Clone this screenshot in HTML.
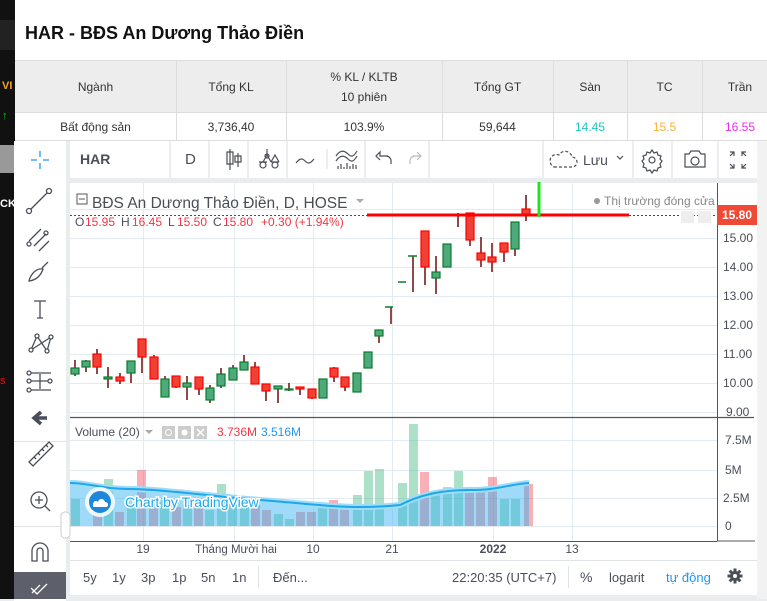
<!DOCTYPE html>
<html><head><meta charset="utf-8"><style>
*{margin:0;padding:0;box-sizing:border-box}
body{width:767px;height:599px;overflow:hidden;background:#e9edf0;font-family:"Liberation Sans",sans-serif;position:relative}
.abs{position:absolute}
.t{font-size:12px;color:#333;text-align:center}
</style></head><body>
<div class="abs" style="left:0;top:0;width:15px;height:599px;background:#111"></div>
<div class="abs" style="left:0;top:20px;width:15px;height:30px;background:#222"></div>
<div class="abs" style="left:2px;top:80px;color:#f5a623;font-size:11px;font-weight:bold">VI</div>
<div class="abs" style="left:2px;top:110px;color:#0c0;font-size:11px;font-weight:bold">↑</div>
<div class="abs" style="left:0;top:145px;width:15px;height:28px;background:#999"></div>
<div class="abs" style="left:0;top:198px;color:#fff;font-size:11px;font-weight:bold">CK</div>
<div class="abs" style="left:0;top:375px;color:#f00;font-size:11px">s</div>
<div class="abs" style="left:15px;top:0;width:752px;height:141px;background:#fff"></div>
<div class="abs" style="left:25px;top:23px;font-size:18px;font-weight:bold;color:#111">HAR - BĐS An Dương Thảo Điền</div>
<div class="abs" style="left:15px;top:60px;width:752px;height:53px;background:#ededed;border-top:1px solid #ddd;border-bottom:1px solid #ddd"></div>
<div class="abs" style="left:15px;top:140px;width:752px;height:1px;background:#ddd"></div>
<div class="abs" style="left:176px;top:60px;width:1px;height:80px;background:#ddd"></div>
<div class="abs" style="left:286px;top:60px;width:1px;height:80px;background:#ddd"></div>
<div class="abs" style="left:442px;top:60px;width:1px;height:80px;background:#ddd"></div>
<div class="abs" style="left:553px;top:60px;width:1px;height:80px;background:#ddd"></div>
<div class="abs" style="left:627px;top:60px;width:1px;height:80px;background:#ddd"></div>
<div class="abs" style="left:702px;top:60px;width:1px;height:80px;background:#ddd"></div>
<div class="abs t" style="left:15px;top:80px;width:161px">Ngành</div>
<div class="abs t" style="left:176px;top:80px;width:110px">Tổng KL</div>
<div class="abs t" style="left:286px;top:70px;width:156px">% KL / KLTB</div>
<div class="abs t" style="left:286px;top:90px;width:156px">10 phiên</div>
<div class="abs t" style="left:442px;top:80px;width:111px">Tổng GT</div>
<div class="abs t" style="left:553px;top:80px;width:74px">Sàn</div>
<div class="abs t" style="left:627px;top:80px;width:75px">TC</div>
<div class="abs t" style="left:702px;top:80px;width:76px">Trần</div>
<div class="abs t" style="left:15px;top:120px;width:161px">Bất động sản</div>
<div class="abs t" style="left:176px;top:120px;width:110px">3,736,40</div>
<div class="abs t" style="left:286px;top:120px;width:156px">103.9%</div>
<div class="abs t" style="left:442px;top:120px;width:111px">59,644</div>
<div class="abs t" style="left:553px;top:120px;width:74px;color:#1cc6c6">14.45</div>
<div class="abs t" style="left:627px;top:120px;width:75px;color:#f7b23b">15.5</div>
<div class="abs t" style="left:702px;top:120px;width:76px;color:#e62ee6">16.55</div>
<div class="abs" style="left:757px;top:141px;width:10px;height:458px;background:#f2f2f2"></div>
<div class="abs" style="left:14px;top:141px;width:52px;height:460px;background:#fff"></div>
<div class="abs" style="left:14px;top:441px;width:52px;height:1px;background:#e0e3e6"></div>
<div class="abs" style="left:14px;top:526px;width:52px;height:1px;background:#e0e3e6"></div>
<div class="abs" style="left:14px;top:572px;width:52px;height:27px;background:#5d606b"></div>
<svg class="abs" style="left:14px;top:141px" width="52" height="458" fill="none" stroke="#4a4e58" stroke-width="1.3">
<g stroke="#2196f3"><path d="M26 10v6M26 22v6M17 19h6M29 19h6"/></g>
<path d="M16 69L34 51"/><circle cx="15" cy="70" r="2.5" fill="#fff"/><circle cx="35" cy="50" r="2.5" fill="#fff"/>
<path d="M15 100l12-12M20 105l12-12M25 110l10-10"/><circle cx="15" cy="103" r="2"/><circle cx="32" cy="92" r="2"/>
<path d="M15 140c2-8 8-13 14-12c-2 6-6 11-14 12zM28 127l6-6"/>
<path d="M20 160h12M26 160v17M23 177h6"/>
<path d="M17 209l6-14 10 15 4-14M17 209l20-13"/><circle cx="17" cy="209" r="2" fill="#fff"/><circle cx="23" cy="195" r="2" fill="#fff"/><circle cx="33" cy="210" r="2" fill="#fff"/><circle cx="37" cy="196" r="2" fill="#fff"/>
<path d="M15 232h22M15 240h22M15 249h22M26 233v15"/><circle cx="15" cy="232" r="2" fill="#fff"/><circle cx="15" cy="240" r="2" fill="#fff"/><circle cx="36" cy="240" r="2" fill="#fff"/><circle cx="15" cy="249" r="2" fill="#fff"/>
<path d="M33 277H21M27 271l-7 6 7 6" stroke-width="3.5"/>
<path d="M15 321l20-20 4 4-20 20zM20 316l2 2M24 312l2 2M28 308l2 2M32 304l2 2"/>
<circle cx="25" cy="359" r="8"/><path d="M31 365l5 5M25 355v8M21 359h8"/>
<path d="M18 420v-10a8 8 0 0 1 16 0v10h-5v-10a3 3 0 0 0-6 0v10z"/>
<path d="M17 447l6 6 10-10M18 452l8-8" stroke="#fff"/>
</svg>
<div class="abs" style="left:70px;top:141px;width:687px;height:37px;background:#fff"></div>
<svg class="abs" style="left:70px;top:141px" width="687" height="37" fill="none" stroke="#4a4e58" stroke-width="1.2">
<g stroke="#e0e3e6"><path d="M100 0v37M139 0v37M178 0v37M217 0v37M257 8v20M295 0v37M359 0v37M473 0v37M563 0v37M602 0v37M648 0v37"/></g>
<path d="M160 8v21M157 11h6v12h-6zM168 12v14M165 15h6v6h-6z"/>
<path d="M197 8v6M193 21l4-7 4 7M189 21h8M201 21h8M201 21l4-7 4 7M189 21l4 0"/><circle cx="197" cy="15" r="2"/><circle cx="193" cy="24" r="3"/><circle cx="205" cy="24" r="3"/>
<path d="M226 22c4-5 6-5 9-2s5 3 9-2"/>
<path d="M266 15c4-6 8-6 12-2s6 2 9-3M266 20c4-6 8-6 12-2s6 2 9-3M268 28v-3M271 28v-5M274 28v-2M277 28v-6M280 28v-3M283 28v-5M286 28v-4"/>
<path d="M318 15h-8v-4l-4 4 4 4M310 15h6a5 5 0 0 1 5 5v3"/>
<path d="M343 15h8M347 11l4 4-4 4M351 15h-6a5 5 0 0 0-5 5v3" stroke="#bbb"/>
<path d="M484 26h18a5 5 0 0 0 0-10a7 7 0 0 0-13-2a6 6 0 0 0-5 12z" stroke-dasharray="3 2"/>
<path d="M547 15l3 3 3-3"/>
<circle cx="582" cy="19" r="3"/><path d="M582 9l2 3 3-1 1 3 3 1-1 3 2 2-2 3 1 3-3 1-1 3-3-1-2 3-2-3-3 1-1-3-3-1 1-3-2-3 2-2-1-3 3-1 1-3 3 1z"/>
<path d="M615 13h4l2-3h8l2 3h4v13h-20z"/><circle cx="625" cy="20" r="4"/>
<path d="M660 11h4v4M664 11l-4 4M676 11h-4v4M672 11l4 4M660 27h4v-4M664 27l-4-4M676 27h-4v-4M672 27l4-4"/>
</svg>
<div class="abs" style="left:80px;top:151px;font-size:14px;font-weight:bold;color:#4a4e58">HAR</div>
<div class="abs" style="left:185px;top:151px;font-size:15px;color:#4a4e58">D</div>
<div class="abs" style="left:583px;top:152px;font-size:14px;color:#4a4e58">Lưu</div>
<div class="abs" style="left:70px;top:183px;width:687px;height:412px;background:#fff"></div>
<svg class="abs" style="left:0;top:0" width="767" height="599">
<g stroke="#e3ebf0" stroke-width="1">
<path d="M70 209.5h647M70 238.5h647M70 267.5h647M70 296.5h647M70 325.5h647M70 354.5h647M70 383.5h647M70 412.5h647"/>
<path d="M70 440.5h647M70 470.5h647M70 498.5h647M70 526.5h647"/>
<path d="M143.5 183v358M234.5 183v358M313.5 183v358M392.5 183v358M493.5 183v358M572.5 183v358"/>
</g>
<path d="M70 417.5h684" stroke="#555" stroke-width="1.2"/>
<path d="M717.5 183v358M70 541.5h647" stroke="#555" stroke-width="1"/>
<path d="M717 541h38" stroke="#555"/>
<g opacity="0.45">
<g fill="#4cbb8a">
<rect x="71" y="499" width="9" height="27"/><rect x="104" y="479" width="9" height="47"/><rect x="127" y="505" width="9" height="21"/><rect x="160" y="500" width="9" height="26"/><rect x="183" y="505" width="9" height="21"/><rect x="205" y="510" width="9" height="16"/><rect x="217" y="484" width="9" height="42"/><rect x="228" y="500" width="9" height="26"/><rect x="240" y="505" width="9" height="21"/><rect x="274" y="514" width="9" height="12"/><rect x="285" y="519" width="9" height="7"/><rect x="318" y="505" width="9" height="21"/><rect x="353" y="495" width="9" height="31"/><rect x="364" y="471" width="9" height="55"/><rect x="375" y="469" width="9" height="57"/><rect x="398" y="483" width="9" height="43"/><rect x="409" y="424" width="9" height="102"/><rect x="431" y="491" width="9" height="35"/><rect x="443" y="487" width="9" height="39"/><rect x="454" y="471" width="9" height="55"/><rect x="500" y="499" width="9" height="27"/><rect x="511" y="499" width="9" height="27"/>
</g>
<g fill="#f0505e">
<rect x="93" y="510" width="9" height="16"/><rect x="115" y="512" width="9" height="14"/><rect x="137" y="470" width="9" height="56"/><rect x="149" y="505" width="9" height="21"/><rect x="172" y="507" width="9" height="19"/><rect x="194" y="507" width="9" height="19"/><rect x="251" y="505" width="9" height="21"/><rect x="262" y="510" width="9" height="16"/><rect x="296" y="512" width="9" height="14"/><rect x="307" y="512" width="9" height="14"/><rect x="329" y="500" width="9" height="26"/><rect x="340" y="510" width="9" height="16"/><rect x="420" y="472" width="9" height="54"/><rect x="465" y="489" width="9" height="37"/><rect x="476" y="489" width="9" height="37"/><rect x="488" y="477" width="9" height="49"/><rect x="524" y="484" width="9" height="42"/>
</g>
</g>
<path d="M70 483C90 483 100 489 130 489S220 497 260 500S330 507 360 507C380 507 390 506 400 505C420 495 440 490 470 490S510 484 529 483L529 526H70Z" fill="#2ab0ef" opacity="0.45"/>
<path d="M70 483C90 483 100 489 130 489S220 497 260 500S330 507 360 507C380 507 390 506 400 505C420 495 440 490 470 490S510 484 529 483" fill="none" stroke="#9fdcf8" stroke-width="6"/>
<path d="M70 483C90 483 100 489 130 489S220 497 260 500S330 507 360 507C380 507 390 506 400 505C420 495 440 490 470 490S510 484 529 483" fill="none" stroke="#1ea7ea" stroke-width="2"/>
<g stroke="#6b0f0f" stroke-width="1.5">
<path d="M75 360v16M86 360v12M97 349v25M108 367v21M120 373v11M131 361v22M142 339v34M154 355v24M165 376v21M176 376v12M187 376v24M199 377v18M210 385v18M221 368v20M233 365v15M244 355v15M255 362v22M266 384v17M278 386v17M289 383v8M300 387v8M312 389v10M334 367v15M345 377v14M379 330v13M391 307v17M413 256v36M425 231v54M436 256v38M458 213v14M470 213v33M481 237v30M492 243v29M504 243v19M515 222v34M526 195v26"/>
</g>
<g stroke-width="1.2">
<g fill="#4ea97c" stroke="#0a7d2a">
<rect x="71" y="368" width="8" height="6"/><rect x="82" y="361" width="8" height="6"/><rect x="104" y="377" width="8" height="2"/><rect x="127" y="361" width="8" height="12"/><rect x="161" y="379" width="8" height="18"/><rect x="183" y="383" width="8" height="4"/><rect x="206" y="388" width="8" height="12"/><rect x="217" y="374" width="8" height="12"/><rect x="229" y="368" width="8" height="12"/><rect x="240" y="362" width="8" height="8"/><rect x="274" y="386" width="8" height="3"/><rect x="285" y="389" width="8" height="1"/><rect x="319" y="379" width="8" height="19"/><rect x="353" y="373" width="8" height="19"/><rect x="364" y="352" width="8" height="16"/><rect x="375" y="330" width="8" height="6"/><rect x="432" y="272" width="8" height="6"/><rect x="443" y="244" width="8" height="23"/><rect x="511" y="222" width="8" height="27"/>
</g>
<g fill="#ef4234" stroke="#f00">
<rect x="93" y="354" width="8" height="13"/><rect x="116" y="377" width="8" height="4"/><rect x="138" y="339" width="8" height="18"/><rect x="150" y="357" width="8" height="22"/><rect x="172" y="376" width="8" height="11"/><rect x="195" y="377" width="8" height="12"/><rect x="251" y="367" width="8" height="17"/><rect x="262" y="384" width="8" height="7"/><rect x="296" y="387" width="8" height="2"/><rect x="308" y="389" width="8" height="9"/><rect x="330" y="368" width="8" height="9"/><rect x="341" y="377" width="8" height="10"/><rect x="421" y="231" width="8" height="36"/><rect x="466" y="213" width="8" height="27"/><rect x="477" y="253" width="8" height="7"/><rect x="488" y="257" width="8" height="5"/><rect x="500" y="243" width="8" height="9"/><rect x="522" y="209" width="8" height="5"/>
</g>
</g>
<path d="M385 307h8M398 282h8M408 256h9" stroke="#0a7d2a" stroke-width="1.5"/>
<path d="M70 215.5h297" stroke="#f00" stroke-width="1" stroke-dasharray="2 2"/>
<path d="M367 215h262" stroke="#f00" stroke-width="3"/>
<path d="M629 215.5h88" stroke="#f00" stroke-width="1" stroke-dasharray="2 2"/>
<path d="M539 182v35" stroke="#1be51b" stroke-width="3"/>
<rect x="717" y="205" width="40" height="20" fill="#ef4a36"/>
<text x="737" y="219" fill="#fff" font-size="12" font-weight="bold" text-anchor="middle" font-family="Liberation Sans">15.80</text>
<rect x="681" y="211" width="13" height="12" fill="#eee"/><rect x="698" y="211" width="13" height="12" fill="#eee"/>
<g font-family="Liberation Sans" font-size="12" fill="#4a4e58">
<text x="723" y="242">15.00</text><text x="723" y="271">14.00</text><text x="723" y="300">13.00</text><text x="723" y="329">12.00</text><text x="723" y="358">11.00</text><text x="723" y="387">10.00</text><text x="726" y="416">9.00</text>
<text x="725" y="444">7.5M</text><text x="725" y="474">5M</text><text x="723" y="502">2.5M</text><text x="725" y="530">0</text>
<text x="143" y="553" text-anchor="middle">19</text><text x="236" y="553" text-anchor="middle" font-size="11.5">Tháng Mười hai</text><text x="313" y="553" text-anchor="middle">10</text><text x="392" y="553" text-anchor="middle">21</text><text x="493" y="553" text-anchor="middle" font-weight="bold">2022</text><text x="572" y="553" text-anchor="middle">13</text>
</g>
<circle cx="100" cy="502" r="15" fill="#fff" opacity="0.85"/>
<circle cx="100" cy="502" r="11" fill="#1e88d8"/>
<path d="M93 505c0-4 3-5 5-3c1-4 6-4 7 0c3 0 4 3 2 5h-14z" fill="#fff"/>
<text x="125" y="507" font-family="Liberation Sans" font-size="14" fill="#1ea7ea" stroke="#fff" stroke-width="3" paint-order="stroke">Chart by TradingView</text>
<rect x="77" y="194" width="10" height="10" fill="none" stroke="#555"/><path d="M79 199h6" stroke="#555"/>
<text x="92" y="208" font-family="Liberation Sans" font-size="15.5" fill="#4a4e58">BĐS An Dương Thảo Điền, D, HOSE</text>
<path d="M356 199l4 4 4-4z" fill="#aaa"/>
<circle cx="597" cy="201" r="3" fill="#999"/>
<text x="604" y="205" font-family="Liberation Sans" font-size="12" fill="#888">Thị trường đóng cửa</text>
<g font-family="Liberation Sans" font-size="12">
<text x="75" y="226" fill="#4a4e58">O</text><text x="85" y="226" fill="#f23645">15.95</text>
<text x="121" y="226" fill="#4a4e58">H</text><text x="132" y="226" fill="#f23645">16.45</text>
<text x="168" y="226" fill="#4a4e58">L</text><text x="177" y="226" fill="#f23645">15.50</text>
<text x="213" y="226" fill="#4a4e58">C</text><text x="223" y="226" fill="#f23645">15.80</text>
<text x="261" y="226" fill="#f23645">+0.30 (+1.94%)</text>
<text x="75" y="436" fill="#4a4e58">Volume (20)</text>
<text x="217" y="436" fill="#f23645">3.736M</text><text x="261" y="436" fill="#2196f3">3.516M</text>
</g>
<path d="M145 430l4 4 4-4z" fill="#aaa"/>
<rect x="162" y="426" width="13" height="13" fill="#ccc"/><rect x="178" y="426" width="13" height="13" fill="#ccc"/><rect x="194" y="426" width="13" height="13" fill="#ccc"/>
<path d="M197 429l7 7M204 429l-7 7" stroke="#fff" stroke-width="1.5"/>
<circle cx="168.5" cy="432.5" r="3" fill="none" stroke="#fff"/><circle cx="184.5" cy="432.5" r="3" fill="#fff"/>
<rect x="61" y="512" width="9" height="26" rx="4" fill="#fff" stroke="#ccc"/>
<path d="M70 560.5h687" stroke="#e0e3e6"/>
<path d="M258.5 566v22M568.5 566v22" stroke="#e0e3e6"/>
<g font-family="Liberation Sans" font-size="13" fill="#4a4e58">
<text x="83" y="582">5y</text><text x="112" y="582">1y</text><text x="141" y="582">3p</text><text x="172" y="582">1p</text><text x="201" y="582">5n</text><text x="232" y="582">1n</text><text x="273" y="582">Đến...</text>
<text x="452" y="582">22:20:35 (UTC+7)</text><text x="580" y="582" font-size="14">%</text><text x="609" y="582">logarit</text>
<text x="666" y="582" fill="#2196f3">tự động</text>
</g>
<g transform="translate(735,576)" fill="#4a4e58">
<circle r="5"/>
<rect x="-1.5" y="-7.5" width="3" height="15"/><rect x="-1.5" y="-7.5" width="3" height="15" transform="rotate(45)"/><rect x="-1.5" y="-7.5" width="3" height="15" transform="rotate(90)"/><rect x="-1.5" y="-7.5" width="3" height="15" transform="rotate(135)"/>
<circle r="2" fill="#fff"/>
</g>
</svg>
</body></html>
